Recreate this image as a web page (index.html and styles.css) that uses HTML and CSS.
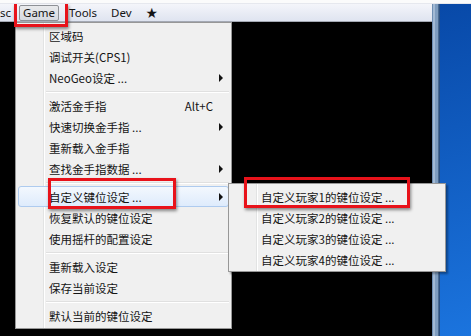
FILE: index.html
```html
<!DOCTYPE html>
<html lang="zh-CN">
<head>
    <meta charset="UTF-8">
    <title>Game 菜单</title>
    <link rel="stylesheet" href="styles.css">
</head>
<body>
    <div class="screen">
        <div class="topline"></div>
        <div class="row">
            <div class="app">
                <div class="menubar">
                    <span class="bar-item first">sc</span>
                    <span class="bar-item active">Game</span>
                    <span class="bar-item">Tools</span>
                    <span class="bar-item">Dev</span>
                    <span class="bar-item">★</span>
                </div>
                <div class="viewport"></div>
            </div>
            <div class="frame-edge"></div>
            <div class="desktop"></div>
        </div>

        <!-- Game 下拉菜单 -->
        <div class="menu main-menu">
            <div class="item"><span class="label">区域码</span></div>
            <div class="item"><span class="label">调试开关(CPS1)</span></div>
            <div class="item"><span class="label">NeoGeo设定 ...</span><span class="arrow"></span></div>
            <div class="sep"></div>
            <div class="item"><span class="label">激活金手指</span><span class="accel">Alt+C</span><span class="arrow empty"></span></div>
            <div class="item"><span class="label">快速切换金手指 ...</span><span class="arrow"></span></div>
            <div class="item"><span class="label">重新载入金手指</span></div>
            <div class="item"><span class="label">查找金手指数据 ...</span><span class="arrow"></span></div>
            <div class="sep"></div>
            <div class="item hover"><span class="label">自定义键位设定 ...</span><span class="arrow"></span></div>
            <div class="item"><span class="label">恢复默认的键位设定</span></div>
            <div class="item"><span class="label">使用摇杆的配置设定</span></div>
            <div class="sep"></div>
            <div class="item"><span class="label">重新载入设定</span></div>
            <div class="item"><span class="label">保存当前设定</span></div>
            <div class="sep"></div>
            <div class="item"><span class="label">默认当前的键位设定</span></div>
        </div>

        <!-- 子菜单 -->
        <div class="menu sub-menu">
            <div class="item"><span class="label">自定义玩家1的键位设定 ...</span></div>
            <div class="item"><span class="label">自定义玩家2的键位设定 ...</span></div>
            <div class="item"><span class="label">自定义玩家3的键位设定 ...</span></div>
            <div class="item"><span class="label">自定义玩家4的键位设定 ...</span></div>
        </div>

        <!-- 红色标注框 -->
        <div class="mark mark-game"></div>
        <div class="mark mark-item"></div>
        <div class="mark mark-sub"></div>
    </div>
</body>
</html>
```

FILE: styles.css
```css
body {
    margin: 0;
    padding: 0;
    font-family: "Noto Sans CJK SC", sans-serif;
    color: #141414;
}
.screen {
    position: relative;
    width: 471px;
    height: 336px;
    overflow: hidden;
    display: flex;
    flex-direction: column;
    background: #000;
}
.topline {
    height: 3px;
    background: #fbfbfb;
    border-bottom: 1px solid #e6e8ee;
}
.row {
    flex: 1;
    display: flex;
}
.app {
    width: 432px;
    display: flex;
    flex-direction: column;
}
.menubar {
    height: 17px;
    display: flex;
    align-items: center;
    gap: 6px;
    background: linear-gradient(#f4f5fa, #dfe4f0);
    border-bottom: 1px solid #a4a9b4;
    font-family: "Noto Sans", sans-serif;
    font-size: 11.5px;
}
.bar-item {
    padding: 0 3px;
    height: 14px;
    line-height: 14px;
    border: 1px solid transparent;
    border-radius: 2px;
}
.bar-item.first {
    margin-left: -4px;
    margin-right: -2px;
}
.bar-item.active {
    border-color: #8e9196;
    background: linear-gradient(#e9eaec, #d6d9e0);
}
.viewport {
    flex: 1;
    background: #000;
}
.frame-edge {
    width: 8px;
    background: linear-gradient(to right, #6f8fb3 0 1px, #a3bad4 1px 3px, #7f9dbf 3px 6px, #4a6b92 6px 7px, #2c5080 7px 8px);
}
.desktop {
    flex: 1;
    background: linear-gradient(165deg, #0849a8, #1b74de);
}
/* 菜单 */
.menu {
    position: absolute;
    padding: 2px;
    border: 1px solid #979797;
    background: linear-gradient(to right, transparent 27px, #e2e3e3 27px 28px, #ffffff 28px 29px, transparent 29px), #f0f0f0;
    box-shadow: 2px 2px 2px rgba(0, 0, 0, 0.35);
    font-size: 11.5px;
}
.main-menu {
    left: 15px;
    top: 22px;
    width: 211px;
}
.sub-menu {
    left: 228px;
    top: 183px;
    width: 212px;
    padding-bottom: 1px;
}
.sub-menu .item {
    padding-left: 29px;
}
.item {
    height: 21px;
    display: flex;
    align-items: center;
    padding-left: 30px;
    border: 1px solid transparent;
    border-radius: 3px;
    box-sizing: border-box;
}
.item.hover {
    border-color: #aecbef;
    background: linear-gradient(#f3f8fe, #deebfc);
}
.label {
    flex: 1;
    white-space: nowrap;
}
.accel {
    white-space: nowrap;
}
.arrow {
    width: 15px;
    display: flex;
    justify-content: center;
}
.arrow::before {
    content: "";
    border-left: 4px solid #111;
    border-top: 4px solid transparent;
    border-bottom: 4px solid transparent;
}
.arrow.empty::before {
    display: none;
}
.sep {
    height: 7px;
    margin-left: 28px;
    background: linear-gradient(transparent 3px, #e0e0e0 3px 4px, #ffffff 4px 5px, transparent 5px);
}
/* 红色标注 */
.mark {
    position: absolute;
    border: 3px solid #e8121a;
    box-shadow: 1px 2px 3px rgba(0, 0, 0, 0.45);
}
.mark-game {
    left: 14px;
    top: 4px;
    width: 48px;
    height: 20px;
    border-top: none;
}
.mark-item {
    left: 48px;
    top: 178px;
    width: 122px;
    height: 25px;
}
.mark-sub {
    left: 244px;
    top: 177px;
    width: 160px;
    height: 25px;
}
```
